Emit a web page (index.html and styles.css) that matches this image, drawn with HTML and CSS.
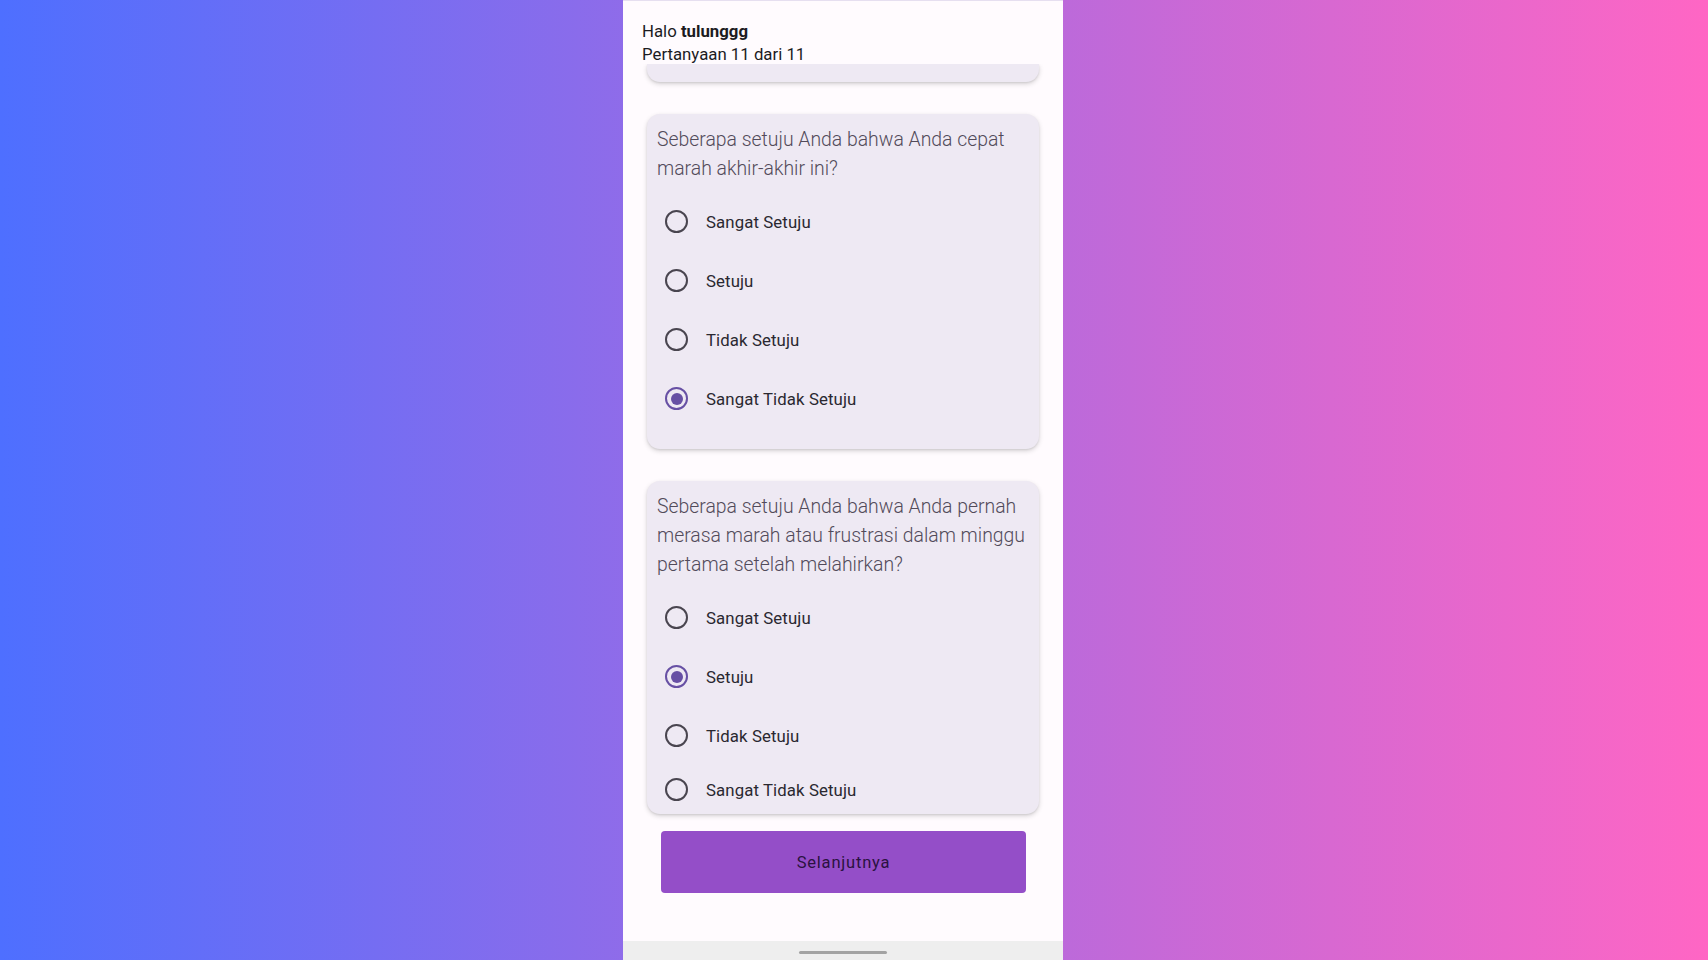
FILE: index.html
```html
<!DOCTYPE html>
<html lang="id">
<head>
<meta charset="utf-8">
<title>Kuesioner</title>
<link rel="stylesheet" href="styles.css">
</head>
<body>
<div class="stage">
  <div class="phone">
    <header class="header">
      <div class="greet">Halo <b>tulunggg</b></div>
      <div class="progress">Pertanyaan 11 dari 11</div>
    </header>

    <main class="list">
      <div class="card card--stub"></div>

      <section class="card">
        <p class="question">Seberapa setuju Anda bahwa Anda cepat marah akhir-akhir ini?</p>
        <div class="options">
          <label class="option"><span class="radio"></span><span class="label">Sangat Setuju</span></label>
          <label class="option"><span class="radio"></span><span class="label">Setuju</span></label>
          <label class="option"><span class="radio"></span><span class="label">Tidak Setuju</span></label>
          <label class="option"><span class="radio radio--on"></span><span class="label">Sangat Tidak Setuju</span></label>
        </div>
      </section>

      <section class="card card--last">
        <p class="question">Seberapa setuju Anda bahwa Anda pernah merasa marah atau frustrasi dalam minggu pertama setelah melahirkan?</p>
        <div class="options">
          <label class="option"><span class="radio"></span><span class="label">Sangat Setuju</span></label>
          <label class="option"><span class="radio radio--on"></span><span class="label">Setuju</span></label>
          <label class="option"><span class="radio"></span><span class="label">Tidak Setuju</span></label>
          <label class="option"><span class="radio"></span><span class="label">Sangat Tidak Setuju</span></label>
        </div>
      </section>
    </main>

    <footer class="footer">
      <button class="next">Selanjutnya</button>
    </footer>

    <div class="navbar"><span class="handle"></span></div>
  </div>
</div>
</body>
</html>
```

FILE: styles.css
```css
* { box-sizing: border-box; }

html, body {
  margin: 0;
  height: 100%;
}

body {
  background: linear-gradient(90deg, #4e6fff 0%, #ff66c4 100%);
  font-family: Roboto, "Noto Sans", sans-serif;
  overflow: hidden;
}

.stage {
  display: flex;
  justify-content: center;
  padding-right: 22px;
  height: 960px;
}

.phone {
  width: 440px;
  height: 960px;
  background: #fffbfe;
  border-top: 1px solid #e6dff0;
  display: flex;
  flex-direction: column;
}

.header {
  height: 63px;
  padding: 19px 19px 0;
  color: #1c1b1f;
  font-size: 16.8px;
  line-height: 23px;
  flex: none;
}

.header b { font-weight: 700; }

.list {
  flex: 1;
  overflow: hidden;
  padding: 0 24px;
  display: flex;
  flex-direction: column;
  gap: 32px;
}

.card {
  flex: none;
  background: #eee9f3;
  border-radius: 13px;
  box-shadow: 0 2px 5px rgba(0, 0, 0, 0.16), 0 1px 2px rgba(0, 0, 0, 0.08);
  padding: 11px 10px 21px;
}

.card--stub {
  height: 18px;
  padding: 0;
  border-radius: 0 0 13px 13px;
}

.card--last {
  padding-bottom: 0;
}

.card--last .option:last-child {
  height: 49px;
}

.question {
  margin: 0;
  font-size: 19.4px;
  line-height: 29px;
  color: #524b5a;
  font-weight: 300;
}

.options {
  margin-top: 9px;
  display: flex;
  flex-direction: column;
}

.option {
  height: 59px;
  display: flex;
  align-items: center;
  padding-left: 8px;
  gap: 18px;
}

.radio {
  width: 23px;
  height: 23px;
  border-radius: 50%;
  border: 2px solid #49454f;
  display: flex;
  align-items: center;
  justify-content: center;
  flex: none;
}

.radio--on {
  border-color: #6750a4;
}

.radio--on::after {
  content: "";
  width: 12px;
  height: 12px;
  border-radius: 50%;
  background: #6750a4;
}

.label {
  font-size: 16.8px;
  color: #2a2830;
  letter-spacing: 0.1px;
}

.footer {
  height: 119px;
  flex: none;
  padding: 9px 37px 0 38px;
}

.next {
  width: 100%;
  height: 62px;
  border: none;
  border-radius: 4px;
  background: #944ec8;
  color: #2a1240;
  font-family: Roboto, "Noto Sans", sans-serif;
  font-size: 16.5px;
  font-weight: 400;
  letter-spacing: 0.8px;
}

.navbar {
  height: 19px;
  flex: none;
  background: #eeeeee;
  display: flex;
  justify-content: center;
  padding-top: 10px;
}

.handle {
  width: 88px;
  height: 3px;
  border-radius: 2px;
  background: #a3a3a3;
}
```
